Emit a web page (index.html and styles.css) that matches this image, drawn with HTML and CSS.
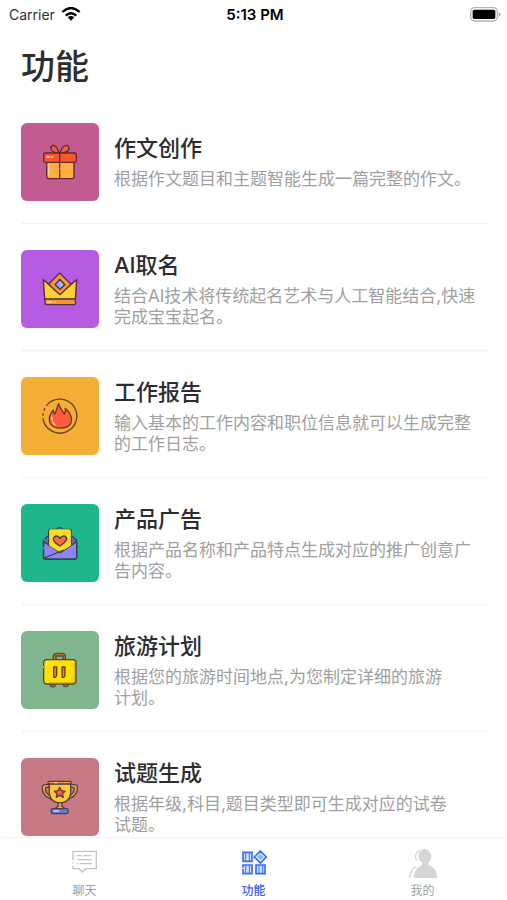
FILE: index.html
```html
<!DOCTYPE html>
<html lang="zh-CN">
<head>
<meta charset="utf-8">
<meta name="viewport" content="width=device-width, initial-scale=1">
<title>功能</title>
<link rel="stylesheet" href="styles.css">
</head>
<body>
<div class="app">
  <header class="status">
    <div class="status-left">
      <span>Carrier</span>
      <svg width="20" height="14" viewBox="0 0 60 42" fill="none" stroke="#000" stroke-width="7" aria-hidden="true"><path d="M4 15Q30-9 56 15M14 26Q30 11 46 26"/><path d="M20 31Q30 23 40 31L30 41Z" fill="#000" stroke="none"/></svg>
    </div>
    <time class="status-time">5:13 PM</time>
    <div class="status-right">
      <svg width="31" height="15" viewBox="0 0 93 45" aria-hidden="true"><rect x="2" y="2" width="80" height="40" rx="12" fill="#fff" stroke="#b5b5b5" stroke-width="4"/><rect x="8" y="8" width="68" height="28" rx="5"/><path d="M86 15q12 7 0 14z" fill="#aaa"/></svg>
    </div>
  </header>

  <main class="content">
    <h1 class="heading">功能</h1>
    <ul class="list">
      <li><a class="row" href="#essay">
        <svg class="tile tile-gift" viewBox="20 20 234 234" aria-hidden="true">
          <g stroke="#5b2b35" stroke-width="4" stroke-linejoin="round" stroke-linecap="round">
            <path d="M97 138h82v44q0 5-5 5h-70q-7 0-7-7z" fill="#ffae3b"/>
            <path d="M134 111c-7-29-23-28-24-16-1 9 11 16 24 16zM137 111c7-29 25-28 27-16 1 10-13 16-27 16z" fill="#fa5a35"/>
            <rect x="88" y="110" width="98" height="28" rx="6" fill="#fa572f"/>
            <path d="M136 111v27M136 143v12M136 160v26" fill="none"/>
          </g>
          <path d="M98 122h8M112 122h3M103 146v29" stroke="#ffd0a0" stroke-width="4" stroke-linecap="round"/>
        </svg>
        <div class="text"><h2>作文创作</h2><p>根据作文题目和主题智能生成一篇完整的作文。</p></div>
      </a></li>
      <li><a class="row" href="#naming">
        <svg class="tile tile-crown" viewBox="20 17 234 234" aria-hidden="true">
          <g stroke="#553344" stroke-width="4" stroke-linejoin="round">
            <path d="M87 106l18 17h62l20-17-4 60H92z" fill="#f47b36"/>
            <path d="M87 106l49 43 51-43-4 59H91z" fill="#ffd12f"/>
            <path d="M136 86l34 34-33 31-34-31z" fill="#f69a36"/>
            <path d="M92 164h90l2 12q0 5-6 5H98q-6 0-6-6z" fill="#f79530"/>
            <path d="M136 105l16 16-15 14-15-14z" fill="#7d9cff"/>
          </g>
          <path d="M136 110v20l10-9z" fill="#a8c5ff"/><path d="M98 173h16M120 173h4" stroke="#ffe1a4" stroke-width="4"/>
        </svg>
        <div class="text"><h2>AI取名</h2><p>结合AI技术将传统起名艺术与人工智能结合,快速完成宝宝起名。</p></div>
      </a></li>
      <li><a class="row" href="#report">
        <svg class="tile tile-fire" viewBox="20 17 234 234" aria-hidden="true">
          <path d="M97 102A51 51 0 1 1 86 142M91 112l-2 5M86 127v5" fill="none" stroke="#614016" stroke-width="4" stroke-linecap="round"/>
          <path d="M133 97C135 110 143 115 150 128C153 123 154 119 153 111C167 124 176 142 169 157C160 174 119 175 109 158C100 143 107 127 117 116C117 123 118 126 121 128C128 117 127 107 133 97Z" fill="#ff5a3c" stroke="#614016" stroke-width="4" stroke-linejoin="round"/>
          <path d="M113 138v8M115 152q3 6 7 9" fill="none" stroke="#ffc49e" stroke-width="5" stroke-linecap="round"/>
        </svg>
        <div class="text"><h2>工作报告</h2><p>输入基本的工作内容和职位信息就可以生成完整的工作日志。</p></div>
      </a></li>
      <li><a class="row" href="#advert">
        <svg class="tile tile-mail" viewBox="20 17 234 234" aria-hidden="true">
          <g stroke="#34424b" stroke-width="4" stroke-linejoin="round">
            <path d="M87 126l15-14h70l15 14v50q0 6-6 6H94q-7 0-7-6z" fill="#6b62c9"/>
            <path d="M126 94q10-14 20 0" fill="none"/>
            <path d="M103 98q0-5 5-5h58q5 0 5 5v50l-34 19-34-19z" fill="#ffdc19"/>
            <path d="M88 130l50 33 49-33v46q0 6-6 6H94q-6 0-6-6z" fill="#8e84fa"/>
            <path d="M105 98q0-5 5-5h54q5 0 5 5v44l-32 20-32-20z" fill="#ffdc19" stroke="none"/>
            <path d="M90 179l58-24" fill="none"/>
            <path d="M137 143c-20-11-23-21-17-27 6-6 14-2 17 4 4-7 13-10 18-4 6 8-2 16-18 27z" fill="#ff6744"/>
          </g>
          <path d="M88 121v5M88 146v7" stroke="#1fb68d" stroke-width="6"/>
        </svg>
        <div class="text"><h2>产品广告</h2><p>根据产品名称和产品特点生成对应的推广创意广告内容。</p></div>
      </a></li>
      <li><a class="row" href="#travel">
        <svg class="tile tile-case" viewBox="20 17 234 234" aria-hidden="true">
          <g stroke="#4f4935" stroke-width="4" stroke-linejoin="round">
            <path d="M107 176h15v6q-7 5-13 0zM148 176h15l-3 6q-6 4-12 0z" fill="#c87536"/>
            <path d="M117 104V92q2-8 10-8h16q9 0 10 8v12h-7V92h-21v12z" fill="#c87536"/>
            <rect x="88" y="103" width="97" height="73" rx="10" fill="#ffe100"/>
            <path d="M118 125h9v24l-3 7h-6zM143 125h9v24l-3 7h-6z" fill="#ff7342"/>
          </g>
          <path d="M180 112v53q0 7-7 7h-67" fill="none" stroke="#e3b900" stroke-width="4"/><path d="M97 112v9" stroke="#fff18a" stroke-width="4"/><path d="M88 122v6" stroke="#80b68e" stroke-width="5"/>
        </svg>
        <div class="text"><h2>旅游计划</h2><p>根据您的旅游时间地点,为您制定详细的旅游<span class="word">计划。</span></p></div>
      </a></li>
      <li><a class="row" href="#exam">
        <svg class="tile tile-cup" viewBox="20 17 234 234" aria-hidden="true">
          <g stroke="#563c43" stroke-width="4" stroke-linejoin="round">
            <path d="M105 97H91q-9 1-7 14 3 21 27 29l-2-8q-15-8-16-22 0-5 4-5h8zM168 97h14q9 1 7 14-3 21-27 29l2-8q15-8 16-22 0-5-4-5h-8z" fill="#f0a54d"/>
            <path d="M130 146h14l-2 14 9 9h-28l9-9z" fill="#f2a132"/>
            <path d="M105 94h64v30q-4 24-25 27h-14q-21-3-25-27z" fill="#ffc82e"/>
            <rect x="101" y="87" width="70" height="8" rx="4" fill="#f6a03b"/>
            <path d="M136 105l5 10 11 2-8 7 3 11-11-6-10 6 2-11-8-7 11-2z" fill="#ff5b36"/>
            <rect x="111" y="169" width="50" height="15" rx="4" fill="#6279d7"/>
          </g>
          <path d="M117 176h17" stroke="#cdd8ff" stroke-width="4"/><path d="M120 91h9" stroke="#ffe7a0" stroke-width="4"/>
        </svg>
        <div class="text"><h2>试题生成</h2><p>根据年级,科目,题目类型即可生成对应的试卷<span class="word">试题。</span></p></div>
      </a></li>
    </ul>
  </main>

  <nav class="tabs">
    <a class="tab" href="#chat">
      <svg width="28" height="28" viewBox="0 0 84 84" fill="none" stroke="#c4c4c4" stroke-width="4" aria-hidden="true"><path d="M6 34V7h70v52H44l-10 10-10-10H6V50M6 44v-4M17 20h15M37 20h22M20 32h42M17 44h4M26 44h37"/></svg>
      <span>聊天</span>
    </a>
    <a class="tab tab-active" href="#features" aria-current="page">
      <svg width="28" height="28" viewBox="0 0 84 84" fill="#d3e2ff" stroke="#3a6df5" stroke-width="5" aria-hidden="true"><path d="M9 10h27v27H9zM9 48h27v26H9zM48 48h27v26H48zM61 6l18 18-18 18-18-18z"/><path d="M17 11v25M28 11v25M17 49v24M28 49v24M57 49v24M68 49v24" stroke-width="3"/><path d="M61 16l9 8-9 9-9-9z" fill="#8db3ff" stroke="none"/><path d="M9 56v4" stroke="#fff"/></svg>
      <span>功能</span>
    </a>
    <a class="tab" href="#mine">
      <svg width="28" height="30" viewBox="0 0 84 90" aria-hidden="true"><path d="M43 0a23 23 0 0 1 15 41v8c17 5 26 16 26 38H14c1-20 10-33 25-38v-8A23 23 0 0 1 43 0z" fill="#d5d5d5"/><path d="M33 2q-17 16-2 36M28 50Q11 60 11 87" fill="none" stroke="#fff" stroke-width="4"/><path d="M32 3q-20 14-8 32M22 52Q3 62 2 87" fill="none" stroke="#d5d5d5" stroke-width="4"/></svg>
      <span>我的</span>
    </a>
  </nav>
</div>
</body>
</html>
```
FILE: styles.css
```css
* {
  box-sizing: border-box;
}

body {
  margin: 0;
  background: #fff;
  color: #2d2d2d;
  font-family: Inter, "Noto Sans CJK SC", sans-serif;
}

h1,
h2,
p,
ul {
  margin: 0;
  padding: 0;
}

a {
  color: inherit;
  text-decoration: none;
}

svg {
  display: block;
}

.app {
  display: flex;
  flex-direction: column;
  height: 100vh;
}

.status {
  display: grid;
  grid-template-columns: 1fr auto 1fr;
  align-items: center;
  height: 28px;
  padding: 0 6px 0 9px;
  font-size: 14px;
  flex: none;
}

.status-left {
  display: flex;
  align-items: center;
  gap: 6px;
}

.status-time {
  color: #000;
  font-size: 15px;
  font-weight: 600;
}

.status-right {
  justify-self: end;
}

.content {
  flex: 1;
  min-height: 0;
  overflow: hidden;
  padding: 0 19px 0 21px;
}

.heading {
  padding: 15px 0 6px;
  font-size: 34px;
  line-height: 48px;
  font-weight: 500;
}

.list {
  list-style: none;
}

.row {
  display: flex;
  align-items: center;
  gap: 15px;
  padding: 26px 0 22px;
  border-bottom: 1px solid #f2f2f2;
}

.tile {
  width: 78px;
  height: 78px;
  flex: none;
  border-radius: 6px;
}

.tile-gift { background: #c15b90; }
.tile-crown { background: #b85be3; }
.tile-fire { background: #f4ad35; }
.tile-mail { background: #1fb68d; }
.tile-case { background: #80b68e; }
.tile-cup { background: #c87a84; }

.text {
  flex: 1;
  min-width: 0;
}

.text h2 {
  margin-bottom: 7px;
  font-size: 22px;
  line-height: 28px;
  font-weight: 500;
}

.text p {
  padding-right: 4px;
  color: #a0a0a0;
  font-size: 17px;
  line-height: 21px;
}

.word {
  white-space: nowrap;
}

.tabs {
  display: flex;
  flex: none;
  height: 61px;
  background: #fff;
  box-shadow: 0 -1px 4px rgba(0, 0, 0, 0.06);
  z-index: 1;
}

.tab {
  flex: 1;
  display: flex;
  flex-direction: column;
  align-items: center;
  justify-content: space-between;
  padding: 10px 0 0;
  color: #a0a0a0;
  font-size: 12px;
  line-height: 18px;
}

.tab-active {
  color: #3a5df5;
  font-weight: 500;
}
```
